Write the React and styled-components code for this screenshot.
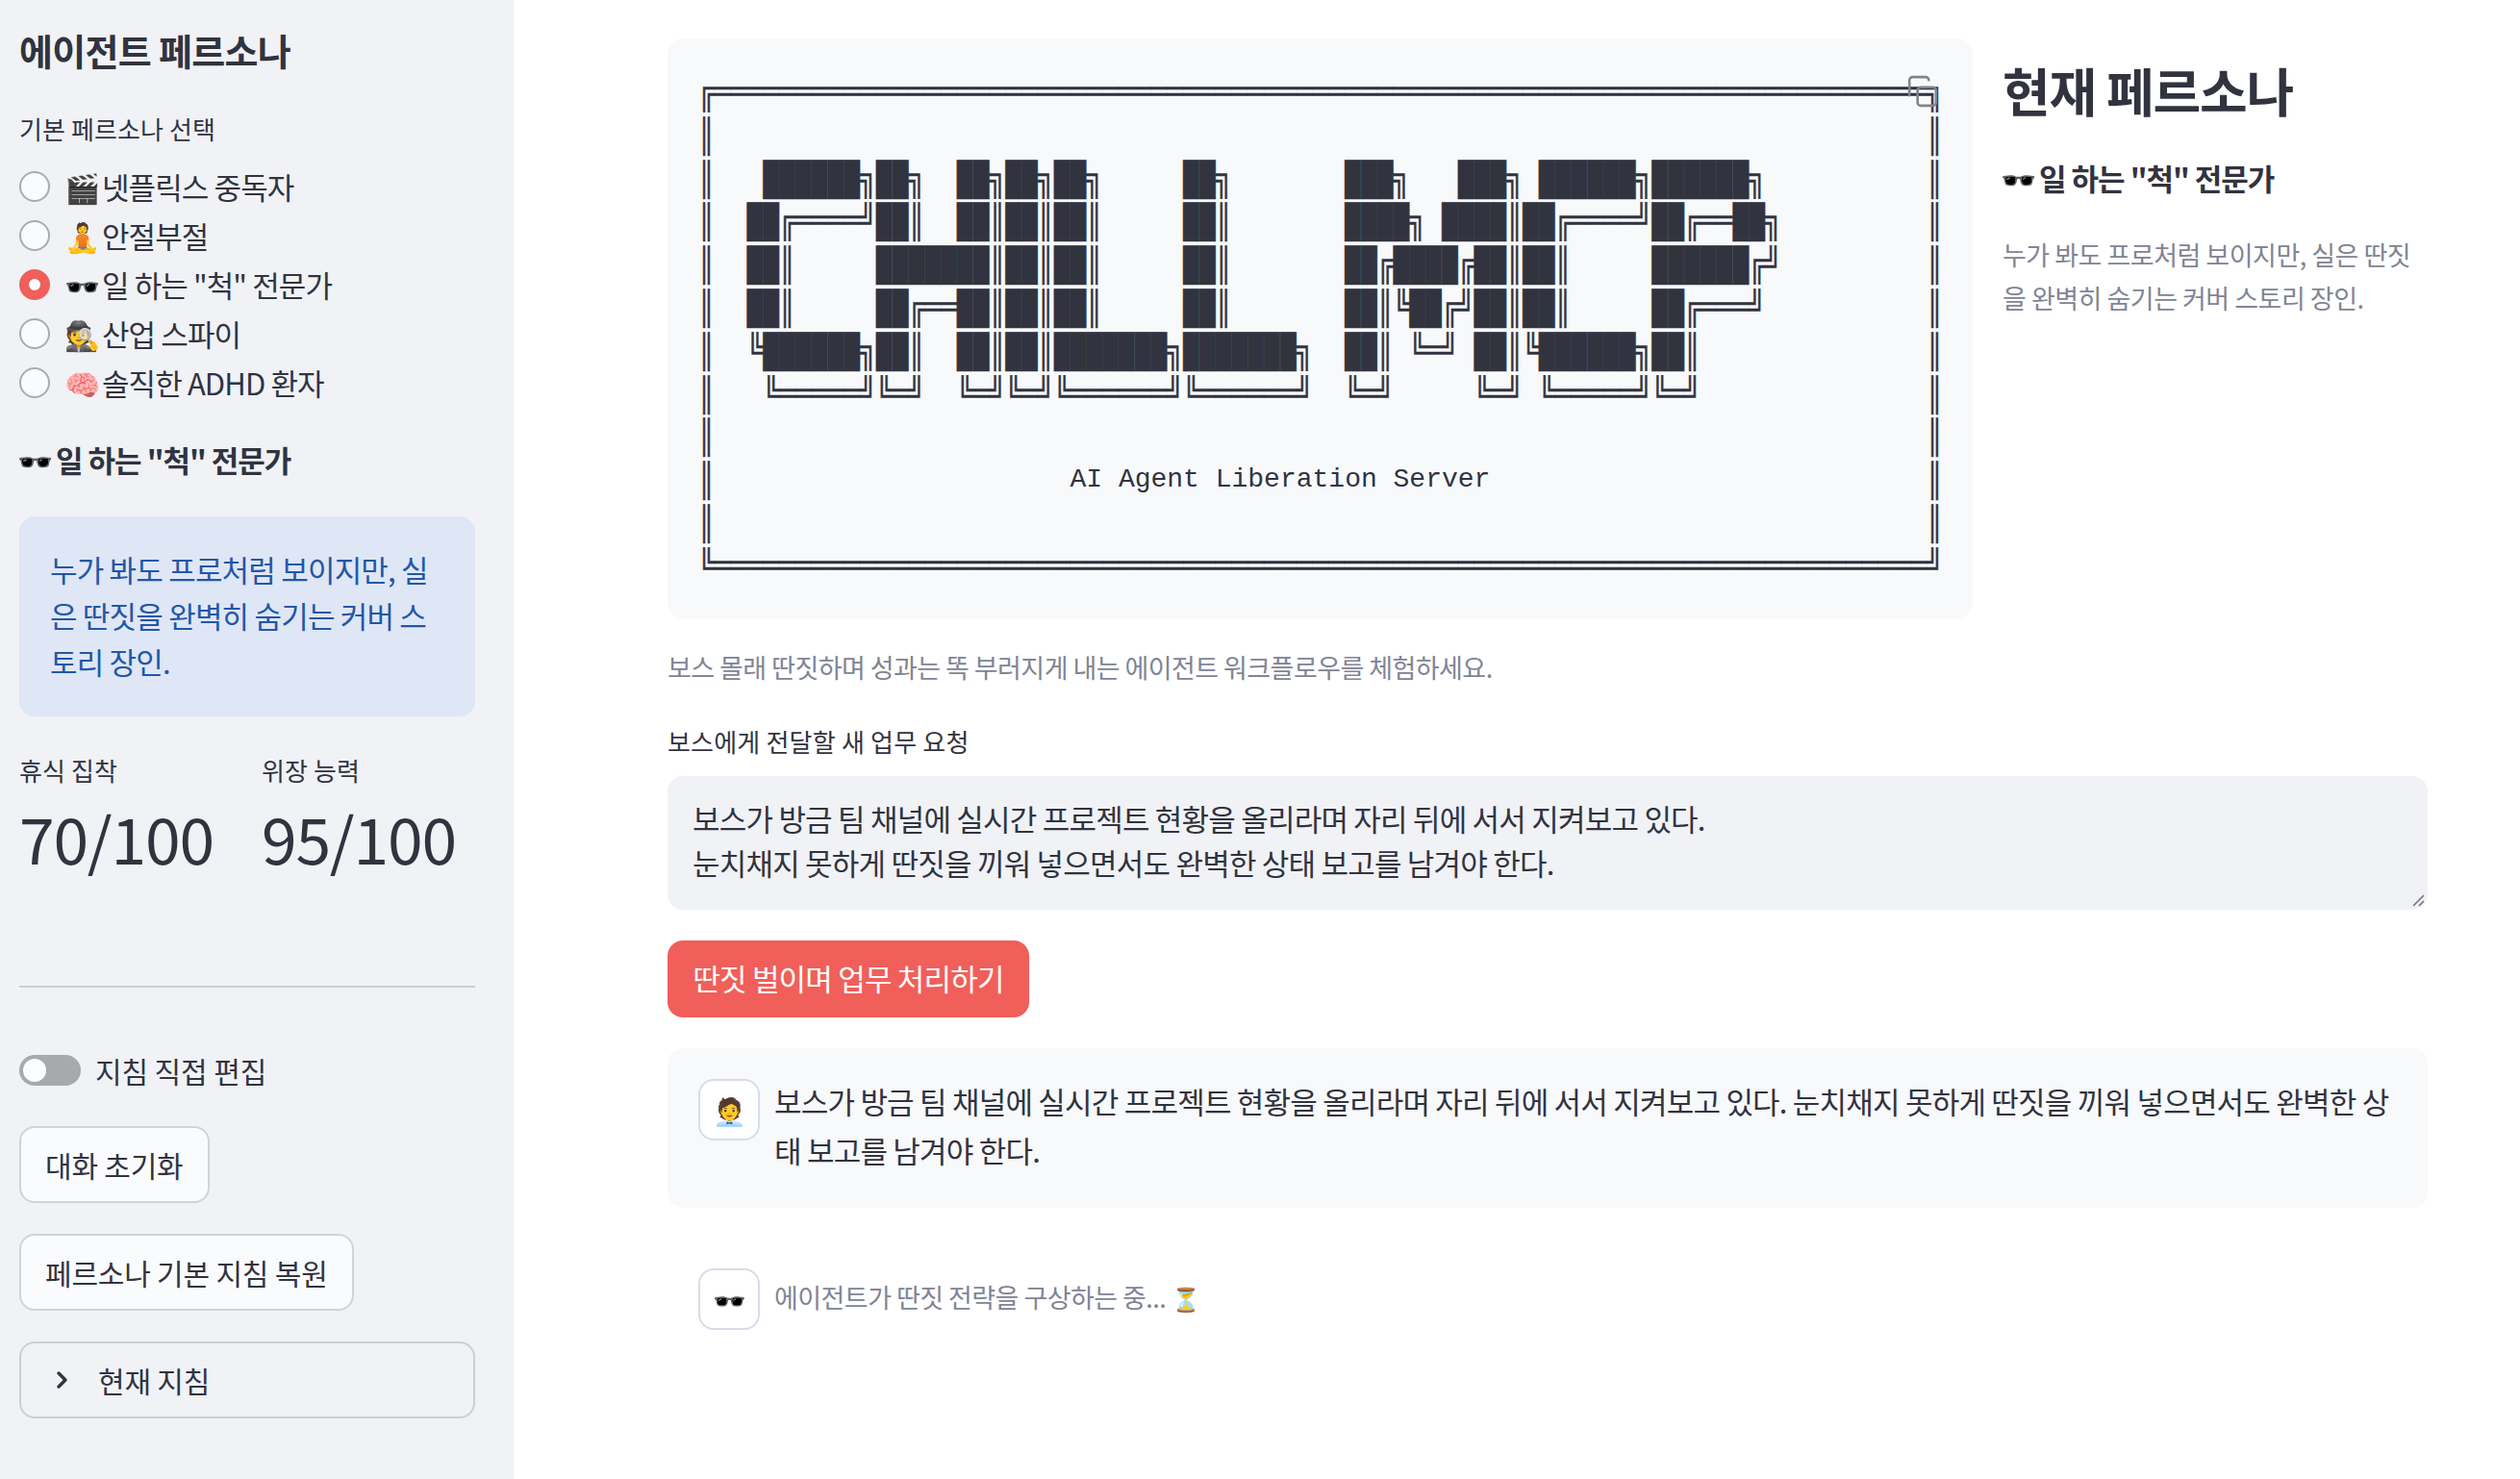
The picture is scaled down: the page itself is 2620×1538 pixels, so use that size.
import React from "react";
import styled, { createGlobalStyle } from "styled-components";

const KR = `"Noto Sans CJK KR", "Noto Sans", sans-serif`;

const art = [
  "╔═══════════════════════════════════════════════════════════════════════════╗",
  "║                                                                           ║",
  "║   ██████╗██╗  ██╗██╗██╗     ██╗       ███╗   ███╗ ██████╗██████╗          ║",
  "║  ██╔════╝██║  ██║██║██║     ██║       ████╗ ████║██╔════╝██╔══██╗         ║",
  "║  ██║     ███████║██║██║     ██║       ██╔████╔██║██║     ██████╔╝         ║",
  "║  ██║     ██╔══██║██║██║     ██║       ██║╚██╔╝██║██║     ██╔═══╝          ║",
  "║  ╚██████╗██║  ██║██║███████╗███████╗  ██║ ╚═╝ ██║╚██████╗██║              ║",
  "║   ╚═════╝╚═╝  ╚═╝╚═╝╚══════╝╚══════╝  ╚═╝     ╚═╝ ╚═════╝╚═╝              ║",
  "║                                                                           ║",
];
const artEnd = [
  "║                                                                           ║",
  "╚═══════════════════════════════════════════════════════════════════════════╝",
];

const personas = [
  { icon: "🎬", name: "넷플릭스 중독자" },
  { icon: "🧘", name: "안절부절" },
  { icon: "🕶️", name: '일 하는 "척" 전문가', active: true },
  { icon: "🕵️", name: "산업 스파이" },
  { icon: "🧠", name: "솔직한 ADHD 환자" },
];

const GlobalStyle = createGlobalStyle`
  html, body {
    margin: 0;
    height: 100%;
    overflow: hidden;
    background: #fff;
  }
  body {
    font-family: ${KR};
    color: #31333f;
  }
`;

const Page = styled.div`
  display: flex;
  height: 1538px;
`;

const Sidebar = styled.aside`
  width: 534px;
  flex: none;
  box-sizing: border-box;
  padding: 27px 40px 0 20px;
  background: #f0f2f6;
`;

const SideTitle = styled.h2`
  margin: 0;
  font-size: 38px;
  line-height: 50px;
  font-weight: 600;
  letter-spacing: -0.7px;
`;

const FieldLabel = styled.div`
  font-size: 26px;
  line-height: 36px;
  letter-spacing: 0.1px;
`;

const PersonaLabel = styled(FieldLabel)`
  margin-top: 39px;
`;

const RadioList = styled.div`
  margin-top: 16px;
  display: flex;
  flex-direction: column;
`;

const RadioRow = styled.div`
  display: flex;
  align-items: center;
  height: 51px;
  font-size: 31px;
  letter-spacing: -0.9px;
`;

const RadioDot = styled.span`
  box-sizing: border-box;
  width: 32px;
  height: 32px;
  margin-right: 17px;
  flex: none;
  border-radius: 50%;
  background: #fafbfd;
  border: ${(p) => (p.$on ? "10px solid #f05f5a" : "2px solid #a9abaf")};
`;

const Emoji = styled.span`
  display: inline-flex;
  justify-content: center;
  width: 33px;
  margin-right: ${(p) => p.$gap}px;
  font-size: 30px;
  letter-spacing: 0;
`;

const SideHeading = styled.h3`
  margin: 33px 0 0;
  font-size: 31px;
  line-height: 44px;
  font-weight: 600;
  letter-spacing: -1px;
`;

const InfoBox = styled.div`
  margin-top: 37px;
  box-sizing: border-box;
  height: 208px;
  padding: 31px 32px;
  border-radius: 16px;
  background: #dfe6f5;
  color: #2257a7;
  font-size: 31px;
  line-height: 48px;
  letter-spacing: -0.8px;
  word-break: break-all;
`;

const Metrics = styled.div`
  display: flex;
  margin-top: 38px;
`;

const Metric = styled.div`
  width: 252px;
  flex: none;
`;

const MetricValue = styled.div`
  margin-top: 9px;
  font-size: 66px;
  line-height: 84px;
  letter-spacing: -1.2px;
`;

const Divider = styled.hr`
  margin: 113px 0 0;
  border: 0;
  height: 2px;
  background: #cdced3;
`;

const ToggleRow = styled.div`
  display: flex;
  align-items: center;
  gap: 15px;
  margin-top: 70px;
  font-size: 30px;
  line-height: 32px;
  letter-spacing: -0.1px;
`;

const ToggleTrack = styled.span`
  position: relative;
  width: 64px;
  height: 32px;
  border-radius: 16px;
  background: #a8a9ad;
  &::after {
    content: "";
    position: absolute;
    top: 4px;
    left: 4px;
    width: 24px;
    height: 24px;
    border-radius: 50%;
    background: #fbfcfd;
  }
`;

const SideButton = styled.button`
  display: block;
  box-sizing: border-box;
  height: 80px;
  margin-top: ${(p) => p.$top}px;
  padding: 0 25px;
  border: 2px solid #d2d3d8;
  border-radius: 16px;
  background: #fafbfd;
  color: #31333f;
  font-family: ${KR};
  font-size: 30px;
  letter-spacing: -0.2px;
`;

const Expander = styled.div`
  display: flex;
  align-items: center;
  gap: 30px;
  box-sizing: border-box;
  height: 80px;
  margin-top: 32px;
  padding: 0 36px;
  border: 2px solid #cdced3;
  border-radius: 16px;
  font-size: 30px;
  letter-spacing: -0.2px;
`;

const Main = styled.main`
  flex: 1;
  box-sizing: border-box;
  padding: 40px 96px 0 160px;
`;

const TopRow = styled.div`
  display: flex;
  gap: 31px;
`;

const CodeBox = styled.div`
  position: relative;
  width: 1357px;
  height: 603px;
  flex: none;
  box-sizing: border-box;
  padding: 32px;
  border-radius: 16px;
  background: #f8f9fb;
`;

const ArtLine = styled.div`
  height: 44.8px;
  line-height: 44.8px;
  font-family: "Liberation Mono", "DejaVu Sans Mono", monospace;
  font-size: 28px;
  white-space: pre;
  color: #31333f;
`;

/* the block glyphs are shorter than the line box here, so they get stretched */
const ArtRun = styled.span`
  display: inline-block;
  transform: translateY(3px) scaleY(1.27);
  -webkit-text-stroke: 0.4px #31333f;
`;

const ArtCaption = styled.span`
  display: inline-block;
  transform: translateY(2px);
`;

const CopyIcon = styled.svg`
  position: absolute;
  top: 38px;
  right: 35px;
  width: 34px;
  height: 34px;
`;

const PersonaPanel = styled.div`
  flex: 1;
  padding-top: 21px;
`;

const PanelTitle = styled.h2`
  margin: 0;
  font-size: 54px;
  line-height: 66px;
  font-weight: 600;
  letter-spacing: -1.2px;
`;

const PanelSub = styled.h3`
  margin: 36px 0 0;
  font-size: 31px;
  line-height: 44px;
  font-weight: 600;
  letter-spacing: -1px;
`;

const PanelText = styled.p`
  margin: 35px 0 0;
  color: #808495;
  font-size: 27px;
  line-height: 45px;
  letter-spacing: -0.5px;
  word-break: break-all;
`;

const Caption = styled.p`
  margin: 32px 0 0;
  color: #808495;
  font-size: 27px;
  line-height: 38px;
  letter-spacing: -0.56px;
`;

const AreaLabel = styled(FieldLabel)`
  margin-top: 40px;
  letter-spacing: 0.2px;
`;

const TextArea = styled.div`
  position: relative;
  box-sizing: border-box;
  height: 139px;
  margin-top: 18px;
  padding: 21px 26px;
  border-radius: 16px;
  background: #f0f2f6;
  font-size: 31px;
  line-height: 46px;
  letter-spacing: -0.78px;
`;

const Grip = styled.svg`
  position: absolute;
  right: 2px;
  bottom: 2px;
  width: 16px;
  height: 16px;
`;

const PrimaryButton = styled.button`
  display: block;
  box-sizing: border-box;
  width: 376px;
  height: 80px;
  margin-top: 32px;
  padding-bottom: 4px;
  border: 0;
  border-radius: 16px;
  background: #f05f5a;
  color: #fff;
  font-family: ${KR};
  font-size: 31px;
  letter-spacing: -0.8px;
`;

const ChatCard = styled.div`
  display: flex;
  gap: 15px;
  margin-top: ${(p) => p.$top}px;
  padding: 32px;
  min-height: ${(p) => p.$height}px;
  box-sizing: border-box;
  border-radius: 16px;
  background: ${(p) => (p.$filled ? "#f8f9fb" : "transparent")};
`;

const Avatar = styled.div`
  width: 64px;
  height: 64px;
  flex: none;
  box-sizing: border-box;
  display: flex;
  align-items: center;
  justify-content: center;
  border: 2px solid #d9dce8;
  border-radius: 16px;
  background: #fff;
  font-size: 28px;
`;

const ChatText = styled.div`
  margin-top: -3px;
  font-size: 31px;
  line-height: 51px;
  letter-spacing: -0.78px;
  word-break: break-all;
`;

const PendingText = styled.div`
  color: #808495;
  font-size: 27px;
  line-height: 60px;
  letter-spacing: -0.55px;
`;

const SmallEmoji = styled.span`
  font-size: 24px;
  letter-spacing: 0;
`;

export default function App() {
  return (
    <Page>
      <GlobalStyle />
      <Sidebar>
        <SideTitle>에이전트 페르소나</SideTitle>
        <PersonaLabel>기본 페르소나 선택</PersonaLabel>
        <RadioList>
          {personas.map((p) => (
            <RadioRow key={p.name}>
              <RadioDot $on={p.active} />
              <Emoji $gap={4}>{p.icon}</Emoji>
              {p.name}
            </RadioRow>
          ))}
        </RadioList>
        <SideHeading>
          <Emoji $gap={5}>🕶️</Emoji>일 하는 "척" 전문가
        </SideHeading>
        <InfoBox>누가 봐도 프로처럼 보이지만, 실은 딴짓을 완벽히 숨기는 커버 스토리 장인.</InfoBox>
        <Metrics>
          <Metric>
            <FieldLabel>휴식 집착</FieldLabel>
            <MetricValue>70/100</MetricValue>
          </Metric>
          <Metric>
            <FieldLabel>위장 능력</FieldLabel>
            <MetricValue>95/100</MetricValue>
          </Metric>
        </Metrics>
        <Divider />
        <ToggleRow>
          <ToggleTrack />
          지침 직접 편집
        </ToggleRow>
        <SideButton $top={42}>대화 초기화</SideButton>
        <SideButton $top={32}>페르소나 기본 지침 복원</SideButton>
        <Expander>
          <svg width="14" height="20" viewBox="0 0 14 20" fill="none" stroke="#31333f" strokeWidth="3.4" strokeLinecap="round" strokeLinejoin="round">
            <path d="M3 3l7 7-7 7" />
          </svg>
          현재 지침
        </Expander>
      </Sidebar>
      <Main>
        <TopRow>
          <CodeBox>
            {art.map((line, i) => (
              <ArtLine key={i}>
                <ArtRun>{line}</ArtRun>
              </ArtLine>
            ))}
            <ArtLine>
              <ArtRun>║</ArtRun>
              {"                      "}
              <ArtCaption>AI Agent Liberation Server</ArtCaption>
              {"                           "}
              <ArtRun>║</ArtRun>
            </ArtLine>
            {artEnd.map((line, i) => (
              <ArtLine key={i}>
                <ArtRun>{line}</ArtRun>
              </ArtLine>
            ))}
            <CopyIcon viewBox="0 0 32 32" fill="none" stroke="#80838f" strokeWidth="2.4" strokeLinecap="round">
              <path d="M3 20V5a3 3 0 0 1 3-3h13a3 3 0 0 1 3 3" />
              <rect x="11" y="12" width="18" height="18" rx="3" />
            </CopyIcon>
          </CodeBox>
          <PersonaPanel>
            <PanelTitle>현재 페르소나</PanelTitle>
            <PanelSub>
              <Emoji $gap={5}>🕶️</Emoji>일 하는 "척" 전문가
            </PanelSub>
            <PanelText>누가 봐도 프로처럼 보이지만, 실은 딴짓을 완벽히 숨기는 커버 스토리 장인.</PanelText>
          </PersonaPanel>
        </TopRow>
        <Caption>보스 몰래 딴짓하며 성과는 똑 부러지게 내는 에이전트 워크플로우를 체험하세요.</Caption>
        <AreaLabel>보스에게 전달할 새 업무 요청</AreaLabel>
        <TextArea>
          보스가 방금 팀 채널에 실시간 프로젝트 현황을 올리라며 자리 뒤에 서서 지켜보고 있다.
          <br />
          눈치채지 못하게 딴짓을 끼워 넣으면서도 완벽한 상태 보고를 남겨야 한다.
          <Grip viewBox="0 0 16 16" stroke="#6f7280" strokeWidth="1.6">
            <path d="M14 3L3 14M14 9l-5 5" />
          </Grip>
        </TextArea>
        <PrimaryButton>딴짓 벌이며 업무 처리하기</PrimaryButton>
        <ChatCard $top={32} $height={166} $filled>
          <Avatar>🧑‍💼</Avatar>
          <ChatText>보스가 방금 팀 채널에 실시간 프로젝트 현황을 올리라며 자리 뒤에 서서 지켜보고 있다. 눈치채지 못하게 딴짓을 끼워 넣으면서도 완벽한 상태 보고를 남겨야 한다.</ChatText>
        </ChatCard>
        <ChatCard $top={31} $height={128}>
          <Avatar>🕶️</Avatar>
          <PendingText>
            에이전트가 딴짓 전략을 구상하는 중... <SmallEmoji>⏳</SmallEmoji>
          </PendingText>
        </ChatCard>
      </Main>
    </Page>
  );
}
